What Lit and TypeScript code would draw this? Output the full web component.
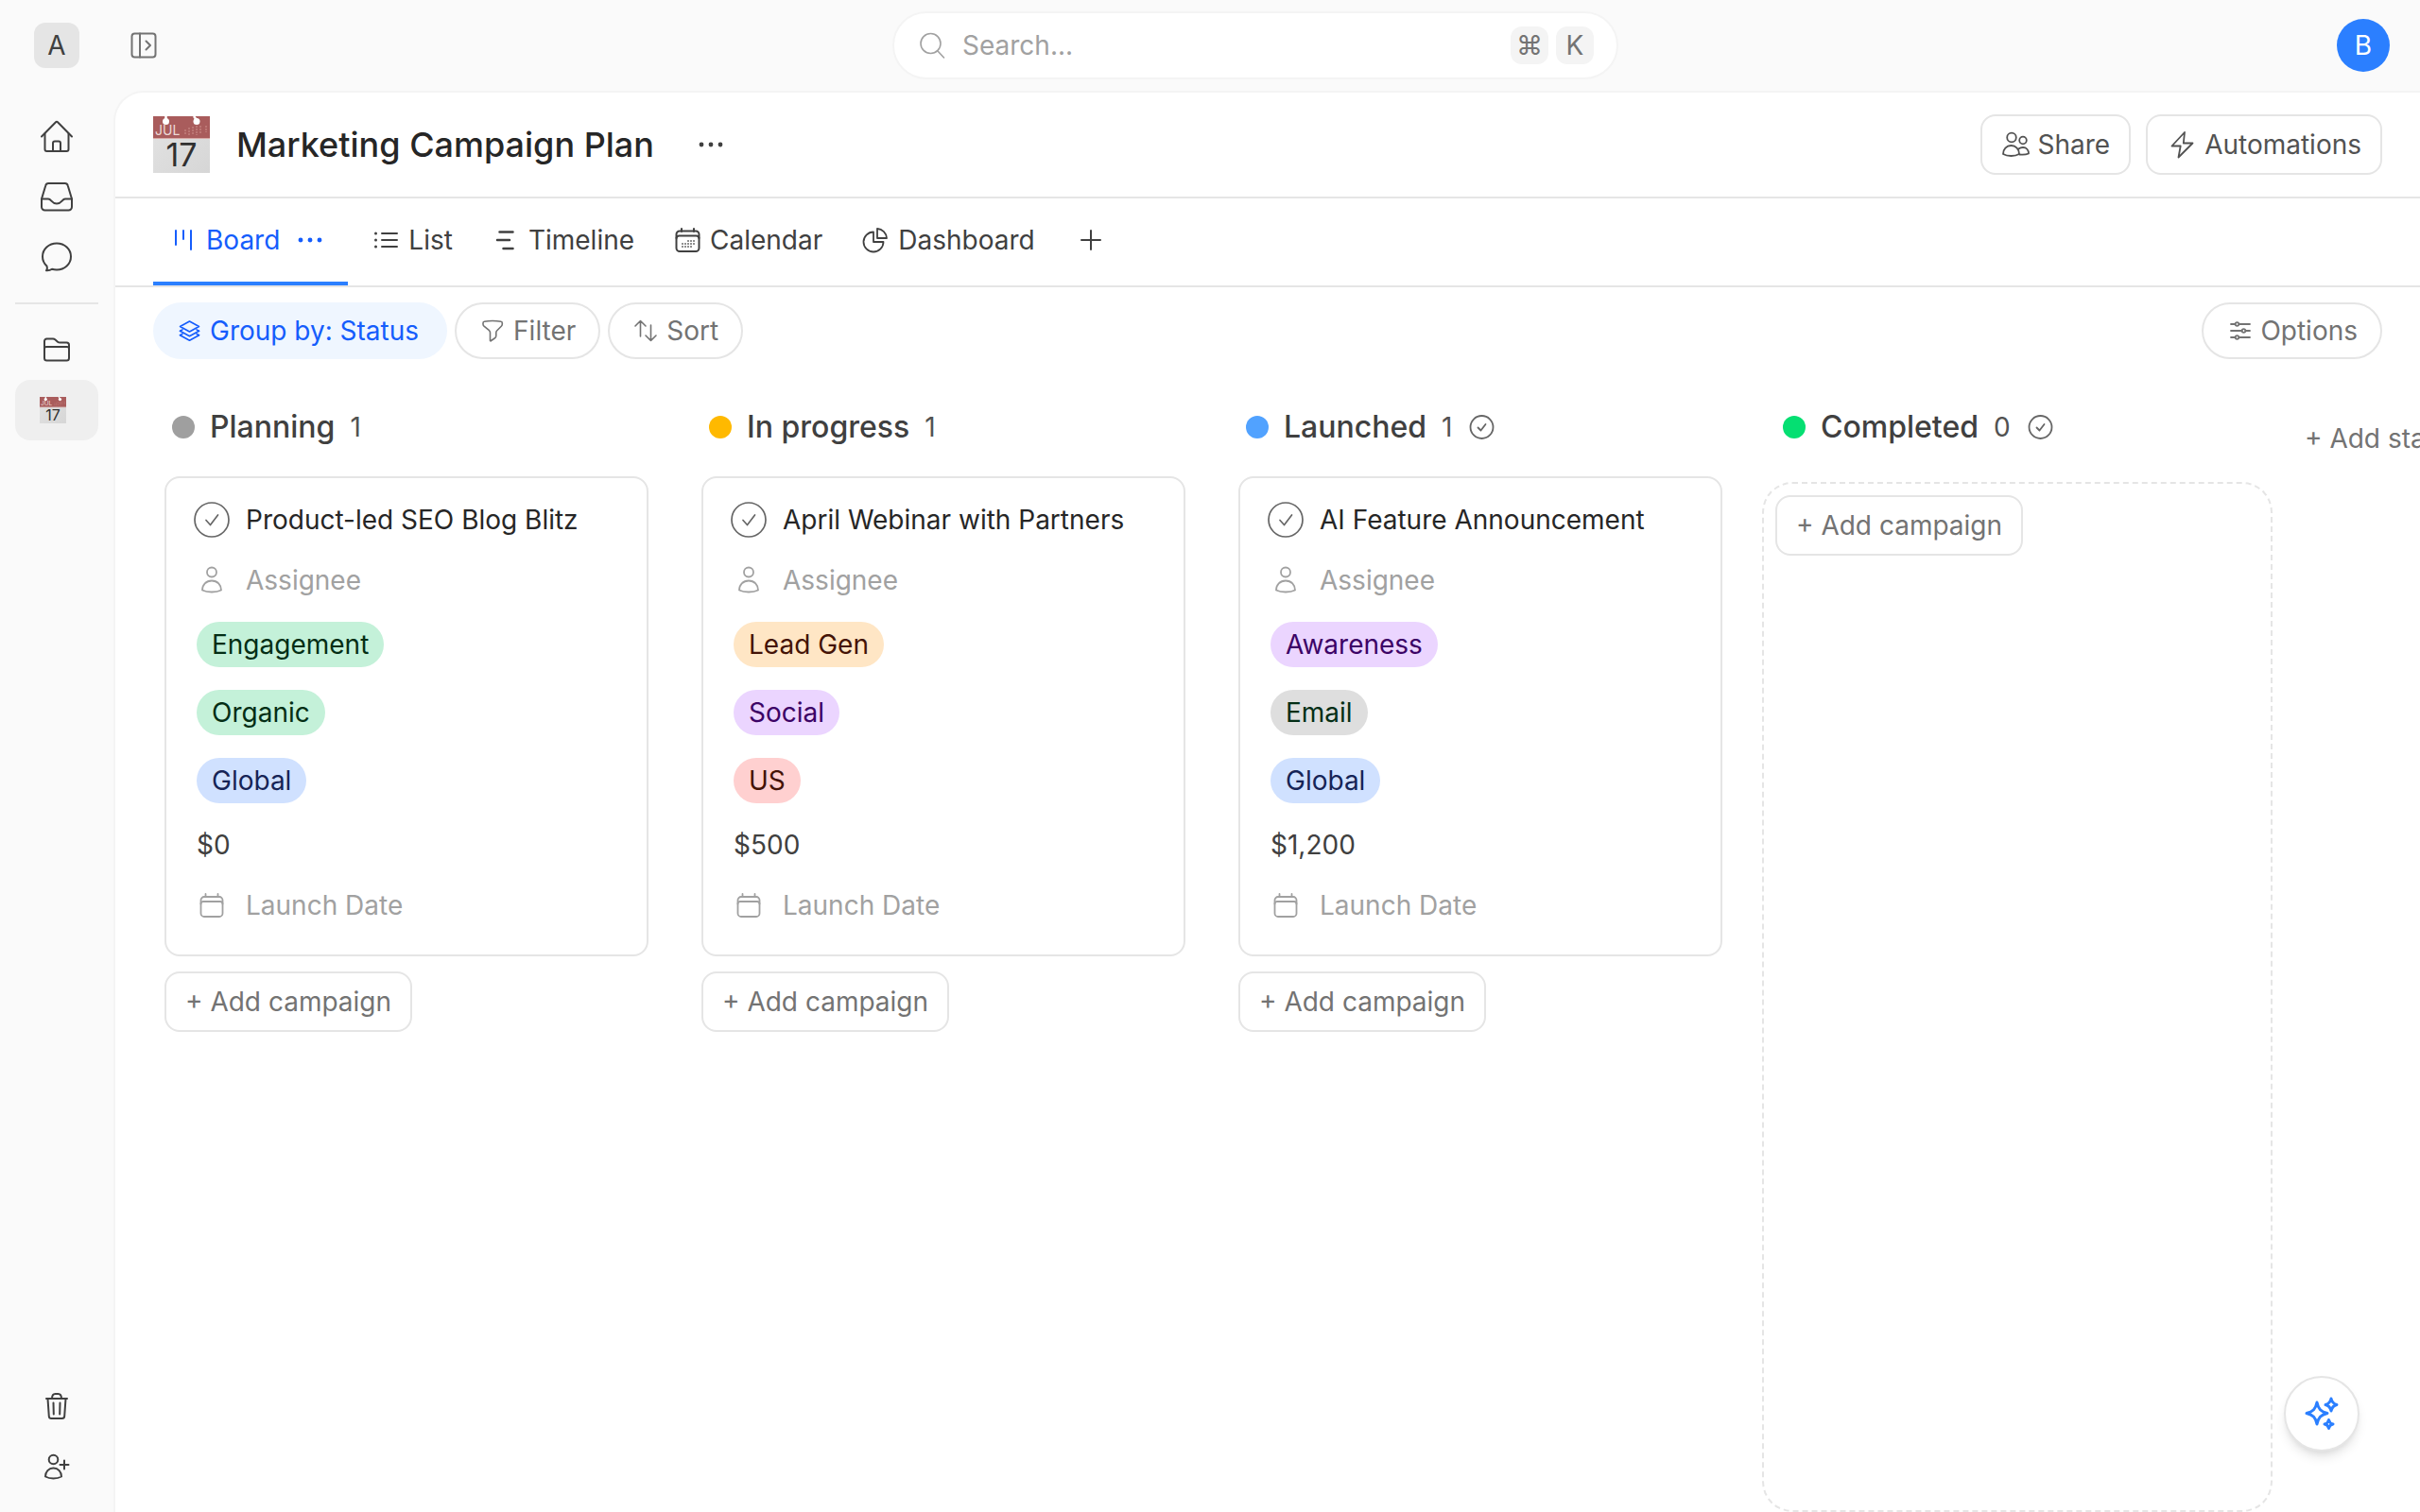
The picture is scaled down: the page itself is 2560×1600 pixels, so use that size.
import { LitElement, html, css, svg, nothing, type TemplateResult } from "lit";
import { customElement, property } from "lit/decorators.js";
import { classMap } from "lit/directives/class-map.js";

interface Tag {
  label: string;
  tone: "green" | "blue" | "purple" | "orange" | "red" | "gray";
}

interface Campaign {
  title: string;
  tags: Tag[];
  budget: string;
}

interface Stage {
  name: string;
  tone: "planning" | "progress" | "launched" | "completed";
  done: boolean;
  campaigns: Campaign[];
}

const STAGES: Stage[] = [
  {
    name: "Planning",
    tone: "planning",
    done: false,
    campaigns: [
      {
        title: "Product-led SEO Blog Blitz",
        tags: [
          { label: "Engagement", tone: "green" },
          { label: "Organic", tone: "green" },
          { label: "Global", tone: "blue" },
        ],
        budget: "$0",
      },
    ],
  },
  {
    name: "In progress",
    tone: "progress",
    done: false,
    campaigns: [
      {
        title: "April Webinar with Partners",
        tags: [
          { label: "Lead Gen", tone: "orange" },
          { label: "Social", tone: "purple" },
          { label: "US", tone: "red" },
        ],
        budget: "$500",
      },
    ],
  },
  {
    name: "Launched",
    tone: "launched",
    done: true,
    campaigns: [
      {
        title: "AI Feature Announcement",
        tags: [
          { label: "Awareness", tone: "purple" },
          { label: "Email", tone: "gray" },
          { label: "Global", tone: "blue" },
        ],
        budget: "$1,200",
      },
    ],
  },
  { name: "Completed", tone: "completed", done: true, campaigns: [] },
];

interface Glyph {
  w: number;
  h: number;
  stroke: number;
  body: TemplateResult;
}

const GLYPHS: Record<string, Glyph> = {
  panel: {
    w: 28, h: 28, stroke: 2,
    body: svg`<rect x="1.5" y="1.5" width="25" height="25" rx="3"/><path d="M10 1.5v25M16.500 9.500l4.500 4.500-4.500 4.500"/>`,
  },
  home: {
    w: 36, h: 36, stroke: 2,
    body: svg`<path d="M2 18.500 17 3.200a1.400 1.400 0 0 1 2 0L34 18.500"/><path d="M5.500 15.500V32a2 2 0 0 0 2 2h21a2 2 0 0 0 2-2V15.500"/><path d="M14 34v-8.500a2 2 0 0 1 2-2h4a2 2 0 0 1 2 2V34"/>`,
  },
  inbox: {
    w: 36, h: 36, stroke: 2,
    body: svg`<path d="M2 20.500 6.300 6.300A3 3 0 0 1 9.200 4h17.600a3 3 0 0 1 2.900 2.300L34 20.500V29a3.500 3.500 0 0 1-3.500 3.500h-25A3.500 3.500 0 0 1 2 29z"/><path d="M2 20.500h7c3.500 0 3.500 5 9 5s5.500-5 9-5h7"/>`,
  },
  chat: {
    w: 36, h: 36, stroke: 2,
    body: svg`<path d="M7.500 27.500C4.800 25 3 21.500 3 17.500 3 9.500 9.700 3.500 18 3.500s15 6 15 14-6.700 14-15 14c-1.700 0-3.400-.2-5-.7-1.800 1.300-3.700 1.700-6 1.500 1.300-1.800 1.200-3.300.5-4.800z"/>`,
  },
  folder: {
    w: 32, h: 32, stroke: 2,
    body: svg`<path d="M3 12.500V7a2.500 2.500 0 0 1 2.500-2.500H12c1 0 1.800.4 2.500 1l2.500 2.200c.7.6 1.500.8 2.500.8h7A2.500 2.500 0 0 1 29 11v14a2.500 2.500 0 0 1-2.500 2.500h-21A2.500 2.500 0 0 1 3 25z"/><path d="M3 15a2 2 0 0 1 2-2h22a2 2 0 0 1 2 2"/>`,
  },
  trash: {
    w: 32, h: 32, stroke: 2,
    body: svg`<path d="M5 8h22"/><path d="M11 8c0-3 1.500-5 3.500-5h3c2 0 3.500 2 3.500 5"/><path d="m6.500 8 1.300 18.700A2.500 2.500 0 0 0 10.300 29h11.400a2.500 2.500 0 0 0 2.500-2.300L25.500 8"/><path d="m12.500 12.500.3 12M19.500 12.500l-.3 12"/>`,
  },
  userPlus: {
    w: 32, h: 32, stroke: 2,
    body: svg`<circle cx="12.500" cy="8.500" r="4.800"/><path d="M4 26.500c0-5 3.500-9 8.500-9s8.500 4 8.500 9c-2.500 1.500-5.200 2-8.500 2s-6-.5-8.500-2z"/><path d="M24 9.500v9M19.500 14h9"/>`,
  },
  search: {
    w: 28, h: 28, stroke: 1.6,
    body: svg`<circle cx="12.500" cy="12" r="10.500"/><path d="m20 20 6.500 7"/>`,
  },
  dots: {
    w: 28, h: 28, stroke: 0,
    body: svg`<g fill="currentColor"><circle cx="4" cy="14" r="2.400"/><circle cx="14" cy="14" r="2.400"/><circle cx="24" cy="14" r="2.400"/></g>`,
  },
  board: {
    w: 26, h: 28, stroke: 2,
    body: svg`<path d="M4 4v15M12 4v9M20 4v20"/>`,
  },
  list: {
    w: 28, h: 28, stroke: 2,
    body: svg`<path d="M10 7h16M10 14h16M10 21h16"/><g fill="currentColor" stroke="none"><circle cx="3.500" cy="7" r="1.500"/><circle cx="3.500" cy="14" r="1.500"/><circle cx="3.500" cy="21" r="1.500"/></g>`,
  },
  timeline: {
    w: 28, h: 28, stroke: 2.5,
    body: svg`<path d="M7.500 5.500h14M5 14h13M11.500 23h10"/>`,
  },
  calendarDots: {
    w: 28, h: 28, stroke: 2,
    body: svg`<path d="M8 2v3M21 2v3"/><rect x="2.500" y="4.500" width="24" height="21.500" rx="3.500"/><path d="M2.500 12a3 3 0 0 1 3-2.500h18a3 3 0 0 1 3 2.500"/><g stroke="#8f8f8f" stroke-linecap="butt" stroke-dasharray="2 1"><path d="M14 15h8M8 18h14M8 21h11"/></g>`,
  },
  chart: {
    w: 28, h: 28, stroke: 1.8,
    body: svg`<path d="M12 5.500A10.500 10.500 0 1 0 22.500 16H12z"/><path d="M16 2a10.500 10.500 0 0 1 10 10H16z"/>`,
  },
  plus: {
    w: 34, h: 28, stroke: 2,
    body: svg`<path d="M17 4v20M7 14h20"/>`,
  },
  layers: {
    w: 26, h: 28, stroke: 1.6,
    body: svg`<path d="m12.500 4 10 5.500-10 5.500-10-5.500z"/><path d="m2.500 14.300 10 5.500 10-5.500M2.500 18.700l10 5.500 10-5.500"/><path d="m2.500 14.300 2.500-1.400M22.500 14.300l-2.500-1.400M2.500 18.700l2.500-1.400M22.500 18.700l-2.500-1.400"/>`,
  },
  filter: {
    w: 28, h: 28, stroke: 1.6,
    body: svg`<path d="M14 3.500c3.200 0 6.200.3 9 .8.800.1 1.300.8 1.300 1.600v1c0 .9-.4 1.700-1 2.300l-4.500 4.500c-.6.6-1 1.500-1 2.300v3.300c0 1.100-.6 2.100-1.600 2.700L12.500 24.500a.5.5 0 0 1-1-.4V16c0-.8-.4-1.700-1-2.300L5 9.200c-.6-.6-1-1.400-1-2.300v-1c0-.8.5-1.500 1.300-1.600C8 3.800 11 3.500 14 3.500z"/>`,
  },
  sort: {
    w: 28, h: 28, stroke: 1.6,
    body: svg`<path d="M8.500 20V3.500M3 9l5.500-5.500L14 9M19.500 8v16.500M14 19l5.500 5.500L25 19"/>`,
  },
  sliders: {
    w: 28, h: 28, stroke: 1.8,
    body: svg`<path d="M5 7h4.500M13.500 7H25M5 14h11.500M20.500 14H25M5 21h4.500M13.500 21H25"/><circle cx="11.500" cy="7" r="1.800"/><circle cx="18.500" cy="14" r="1.800"/><circle cx="11.500" cy="21" r="1.800"/>`,
  },
  people: {
    w: 32, h: 32, stroke: 1.8,
    body: svg`<circle cx="11" cy="8.500" r="4.800"/><path d="M2 26c0-5 3.500-9 8.500-9S19 21 19 26c-2.500 1.500-5.200 2-8.500 2S4.500 27.500 2 26z"/><circle cx="23" cy="11.500" r="3.800"/><path d="M18.500 20.500c1.200-1 2.700-1.500 4.500-1.500 3.500 0 6 2.800 6 6.500-2.800 1.200-6 1.400-9.500 1"/>`,
  },
  bolt: {
    w: 34, h: 32, stroke: 1.8,
    body: svg`<path d="M19 3 5.500 17.500h9.200l-2.200 12L27.500 14.500H17.800z"/>`,
  },
  person: {
    w: 32, h: 32, stroke: 1.8,
    body: svg`<circle cx="16" cy="7.500" r="5"/><path d="M6 26.500c0-5.500 4-10 10-10s10 4.500 10 10c-3 1.500-6.300 2-10 2s-7-.5-10-2z"/>`,
  },
  calendar: {
    w: 32, h: 32, stroke: 1.8,
    body: svg`<path d="M9.500 4v3M22.500 4v3"/><rect x="4.500" y="7" width="23" height="21" rx="3.500"/><path d="M4.500 14.500a2.500 2.500 0 0 1 2.500-2.500h18a2.500 2.500 0 0 1 2.500 2.500"/>`,
  },
  check: {
    w: 40, h: 40, stroke: 1.7,
    body: svg`<circle cx="20" cy="20" r="18"/><path d="M14 20.500 18.500 25.500 26.500 15"/>`,
  },
  checkSmall: {
    w: 32, h: 28, stroke: 1.8,
    body: svg`<circle cx="15.500" cy="14" r="12"/><path d="M11.500 14.500 14.500 17.500 19.500 11"/>`,
  },
  sparkles: {
    w: 40, h: 40, stroke: 3,
    body: svg`<path d="M15 8c1.500 7 4 9.800 11 11.500-7 1.700-9.500 4.500-11 11.500C13.500 24 11 21.200 4 19.500 11 17.800 13.500 15 15 8z"/><path d="M30 4c.9 4 2.400 5.600 6 6.500-3.600.9-5.100 2.500-6 6.500-.9-4-2.400-5.600-6-6.500C27.600 9.600 29.100 8 30 4zM27.500 26.500c.7 3 1.700 4 4.500 4.500-2.800.5-3.800 1.500-4.500 4.500-.7-3-1.700-4-4.500-4.500 2.800-.5 3.800-1.500 4.500-4.500z"/>`,
  },
};

const glyph = (name: string) => {
  const g = GLYPHS[name];
  return html`<svg
    class="glyph"
    width=${g.w}
    height=${g.h}
    viewBox="0 0 ${g.w} ${g.h}"
    fill="none"
    stroke="currentColor"
    stroke-width=${g.stroke}
    stroke-linecap="round"
    stroke-linejoin="round"
    aria-hidden="true"
  >${g.body}</svg>`;
};

const base = css`
  *,
  *::before,
  *::after {
    box-sizing: border-box;
  }
  .glyph {
    display: block;
    flex: none;
  }
  button {
    margin: 0;
    padding: 0;
    border: 0;
    background: none;
    color: inherit;
    font: inherit;
    cursor: pointer;
    display: inline-flex;
    align-items: center;
    white-space: nowrap;
  }
  .outlined {
    height: 64px;
    padding: 0 20px;
    border: 2px solid #e5e5e5;
    border-radius: 16px;
    background: #fff;
  }
`;

@customElement("tear-off-calendar")
export class TearOffCalendar extends LitElement {
  static styles = css`
    :host {
      display: block;
      width: 60px;
      height: 60px;
      flex: none;
    }
    .page {
      display: block;
      width: 100%;
      height: 100%;
    }
    .month {
      font: 400 14px Inter, sans-serif;
      fill: #ecd9d6;
    }
    .day {
      font: 400 34px Inter, sans-serif;
      fill: #303030;
    }
  `;

  render() {
    return html`<svg class="page" viewBox="0 0 60 60" aria-hidden="true">
      <defs>
        <linearGradient id="paper" x1="0" y1="0" x2="1" y2="1">
          <stop offset="0" stop-color="#e3e3e3" />
          <stop offset="1" stop-color="#d6d6d6" />
        </linearGradient>
      </defs>
      <rect width="60" height="60" fill="url(#paper)" />
      <rect width="60" height="23" fill="#a95c5c" />
      <rect y="23" width="60" height="1" fill="#d9a9a5" />
      <path d="M13.5 0v4M43 0l3 4" stroke="#fff" stroke-width="2.5" />
      <circle cx="13.5" cy="5.5" r="3.5" fill="#fff" />
      <circle cx="46" cy="5.5" r="3.5" fill="#fff" />
      <g stroke="#cf918c" stroke-width="1" stroke-dasharray="2 1">
        <path d="M34 14v6M38 12v8M42 11v9M46 10v10M50 10v8M56 10v7" />
      </g>
      <text class="month" x="2" y="20">JUL</text>
      <text class="day" x="30" y="53" text-anchor="middle">17</text>
    </svg>`;
  }
}

@customElement("campaign-card")
export class CampaignCard extends LitElement {
  @property({ attribute: false }) campaign!: Campaign;

  static styles = [
    base,
    css`
      :host {
        display: block;
      }
      .card {
        border: 2px solid #e5e5e5;
        border-radius: 16px;
        background: #fff;
        padding: 12px 28px 20px;
      }
      .row {
        display: flex;
        align-items: center;
        gap: 16px;
        height: 64px;
      }
      .lead {
        display: flex;
        justify-content: center;
        width: 40px;
      }
      .title {
        margin: 0;
        font-size: 28px;
        font-weight: 400;
        color: #262626;
        white-space: nowrap;
      }
      .done {
        color: #666;
      }
      .empty {
        color: #a1a1a1;
      }
      .tags {
        margin: 0;
        padding: 0 4px;
        list-style: none;
      }
      .tag-row {
        display: flex;
        align-items: center;
        height: 72px;
      }
      .tag {
        height: 48px;
        line-height: 48px;
        padding: 0 16px;
        border-radius: 24px;
      }
      .green { background: #c4f1d9; color: #032e15; }
      .blue { background: #d0e1ff; color: #162456; }
      .purple { background: #ebd5ff; color: #3c0366; }
      .orange { background: #ffe6c5; color: #441306; }
      .red { background: #ffd0d0; color: #441306; }
      .gray { background: #dedede; color: #032e15; }
      .budget {
        padding: 0 4px;
        color: #404040;
      }
    `,
  ];

  render() {
    const c = this.campaign;
    return html`<article class="card">
      <div class="row">
        <button class="lead done" aria-label="Mark complete">${glyph("check")}</button>
        <h3 class="title">${c.title}</h3>
      </div>
      <div class="row empty"><span class="lead">${glyph("person")}</span>Assignee</div>
      <ul class="tags">
        ${c.tags.map(
          (t) => html`<li class="tag-row">
            <span class=${classMap({ tag: true, [t.tone]: true })}>${t.label}</span>
          </li>`,
        )}
      </ul>
      <div class="row budget">${c.budget}</div>
      <div class="row empty"><span class="lead">${glyph("calendar")}</span>Launch Date</div>
    </article>`;
  }
}

@customElement("stage-column")
export class StageColumn extends LitElement {
  @property({ attribute: false }) stage!: Stage;

  static styles = [
    base,
    css`
      :host {
        display: flex;
        flex-direction: column;
        flex: none;
        width: 540px;
      }
      .head {
        display: flex;
        align-items: center;
        gap: 16px;
        height: 72px;
        padding: 0 22px;
      }
      .dot {
        width: 24px;
        height: 24px;
        border-radius: 50%;
      }
      .planning { background: #9f9f9f; }
      .progress { background: #ffb900; }
      .launched { background: #51a2ff; }
      .completed { background: #05df72; }
      .name {
        margin: 0;
        font-size: 32px;
        font-weight: 500;
        color: #404040;
      }
      .count {
        color: #525252;
      }
      .mark {
        color: #666;
      }
      .body {
        display: flex;
        flex-direction: column;
        align-items: stretch;
        gap: 16px;
        padding: 16px 14px;
      }
      .body.empty {
        flex: 1;
        margin-top: 22px;
        padding: 12px;
        border: 2px dashed #e5e5e5;
        border-radius: 32px;
      }
      .add {
        align-self: flex-start;
        color: #737373;
      }
    `,
  ];

  render() {
    const s = this.stage;
    const empty = s.campaigns.length === 0;
    return html`
      <header class="head">
        <span class=${classMap({ dot: true, [s.tone]: true })}></span>
        <h2 class="name">${s.name}</h2>
        <span class="count">${s.campaigns.length}</span>
        ${s.done ? html`<span class="mark">${glyph("checkSmall")}</span>` : nothing}
      </header>
      <div class=${classMap({ body: true, empty })}>
        ${s.campaigns.map((c) => html`<campaign-card .campaign=${c}></campaign-card>`)}
        <button class="outlined add">+ Add campaign</button>
      </div>
    `;
  }
}

@customElement("app-root")
export class AppRoot extends LitElement {
  static styles = [
    base,
    css`
      :host {
        display: grid;
        grid-template-columns: 120px minmax(0, 1fr);
        grid-template-rows: 96px minmax(0, 1fr);
        height: 100vh;
        background: #fafafa;
        color: #404040;
        font: 400 28px/40px Inter, "Liberation Sans", sans-serif;
        overflow: hidden;
      }
      .corner {
        display: flex;
        align-items: center;
        justify-content: center;
      }
      .workspace {
        justify-content: center;
        width: 48px;
        height: 48px;
        border-radius: 12px;
        background: #e5e5e5;
      }
      .topbar {
        display: grid;
        grid-template-columns: 1fr minmax(0, 768px) 1fr;
        align-items: center;
        padding: 0 32px 0 8px;
      }
      .toggle {
        justify-self: start;
        margin-left: 10px;
        color: #737373;
      }
      .search {
        display: flex;
        align-items: center;
        gap: 18px;
        height: 72px;
        padding: 0 24px 0 26px;
        border: 2px solid #f4f4f4;
        border-radius: 36px;
        background: #fff;
        color: #a1a1a1;
      }
      .query {
        flex: 1;
        min-width: 0;
        border: 0;
        padding: 0;
        outline: 0;
        background: none;
        font: inherit;
        color: #404040;
      }
      .query::placeholder {
        color: #a1a1a1;
        opacity: 1;
      }
      .keys {
        display: flex;
        gap: 8px;
      }
      .key {
        width: 40px;
        height: 40px;
        border-radius: 12px;
        background: #f4f4f4;
        color: #737373;
        font: inherit;
        text-align: center;
      }
      .avatar {
        justify-self: end;
        justify-content: center;
        width: 56px;
        height: 56px;
        border-radius: 50%;
        background: #2b7fff;
        color: #fff;
      }
      .rail {
        display: flex;
        flex-direction: column;
        justify-content: space-between;
        padding: 16px;
      }
      .group {
        display: flex;
        flex-direction: column;
      }
      .item {
        display: flex;
        align-items: center;
        justify-content: center;
        height: 64px;
        border-radius: 16px;
        color: #404040;
      }
      .item.current {
        background: #efefef;
        padding-right: 8px;
      }
      .mini {
        width: 28px;
        height: 28px;
      }
      .rule {
        width: 100%;
        height: 2px;
        margin: 16px 0;
        border: 0;
        background: #e5e5e5;
      }
      .panel {
        display: flex;
        flex-direction: column;
        min-width: 0;
        min-height: 0;
        border: solid #f4f4f4;
        border-width: 2px 0 0 2px;
        border-top-left-radius: 32px;
        background: #fff;
      }
      .heading {
        display: flex;
        align-items: center;
        height: 112px;
        padding: 0 40px;
        border-bottom: 2px solid #e5e5e5;
      }
      .name {
        margin: 0 46px 0 28px;
        font-size: 36px;
        font-weight: 500;
        color: #262626;
      }
      .actions {
        display: flex;
        gap: 16px;
        margin-left: auto;
        color: #525252;
      }
      .action {
        gap: 6px;
      }
      .tabs {
        display: flex;
        gap: 2px;
        height: 94px;
        padding: 0 40px;
        border-bottom: 2px solid #e5e5e5;
      }
      .tab {
        display: flex;
        align-items: center;
        gap: 10px;
        padding: 0 20px;
        border-bottom: 4px solid transparent;
        color: inherit;
        text-decoration: none;
      }
      .tab.active {
        margin-right: 4px;
        border-bottom-color: #2b7fff;
        color: #155dfc;
      }
      .tab-menu {
        padding: 0 6px 0 8px;
      }
      .tools {
        display: flex;
        align-items: center;
        gap: 8px;
        padding: 16px 40px;
      }
      .pill {
        gap: 8px;
        height: 60px;
        padding: 0 24px;
        border: 2px solid #e5e5e5;
        border-radius: 30px;
        color: #737373;
      }
      .pill.on {
        padding-right: 28px;
        border-color: #eff6ff;
        background: #eff6ff;
        color: #155dfc;
      }
      .end {
        margin-left: auto;
      }
      .board {
        display: flex;
        flex: 1;
        gap: 28px;
        min-height: 0;
        padding: 20px 0 0 38px;
        overflow: hidden;
      }
      .new-stage {
        flex: none;
        align-self: flex-start;
        height: 64px;
        margin-top: 16px;
        padding: 0 6px;
        color: #737373;
      }
      .assistant {
        position: fixed;
        right: 64px;
        bottom: 64px;
        justify-content: center;
        width: 80px;
        height: 80px;
        border: 2px solid #e5e5e5;
        border-radius: 50%;
        background: #fff;
        color: #2b7fff;
        box-shadow: 0 8px 12px -2px rgba(0, 0, 0, 0.1), 0 4px 8px -4px rgba(0, 0, 0, 0.1);
      }
    `,
  ];

  private tab(icon: string, label: string) {
    return html`<a class="tab" href="#">${glyph(icon)}${label}</a>`;
  }

  render() {
    return html`
      <div class="corner"><button class="workspace">A</button></div>
      <header class="topbar">
        <button class="toggle" aria-label="Expand sidebar">${glyph("panel")}</button>
        <label class="search">
          ${glyph("search")}
          <input class="query" type="text" placeholder="Search..." aria-label="Search" />
          <span class="keys"><kbd class="key">⌘</kbd><kbd class="key">K</kbd></span>
        </label>
        <button class="avatar">B</button>
      </header>

      <nav class="rail">
        <div class="group">
          <a class="item" href="#" aria-label="Home">${glyph("home")}</a>
          <a class="item" href="#" aria-label="Inbox">${glyph("inbox")}</a>
          <a class="item" href="#" aria-label="Messages">${glyph("chat")}</a>
          <hr class="rule" />
          <a class="item" href="#" aria-label="Folders">${glyph("folder")}</a>
          <a class="item current" href="#" aria-label="Marketing Campaign Plan">
            <tear-off-calendar class="mini"></tear-off-calendar>
          </a>
        </div>
        <div class="group">
          <a class="item" href="#" aria-label="Trash">${glyph("trash")}</a>
          <a class="item" href="#" aria-label="Invite">${glyph("userPlus")}</a>
        </div>
      </nav>

      <main class="panel">
        <div class="heading">
          <tear-off-calendar></tear-off-calendar>
          <h1 class="name">Marketing Campaign Plan</h1>
          <button aria-label="More">${glyph("dots")}</button>
          <div class="actions">
            <button class="outlined action">${glyph("people")}Share</button>
            <button class="outlined action">${glyph("bolt")}Automations</button>
          </div>
        </div>
        <nav class="tabs">
          <a class="tab active" href="#"
            >${glyph("board")}Board<span class="tab-menu">${glyph("dots")}</span></a
          >
          ${this.tab("list", "List")} ${this.tab("timeline", "Timeline")}
          ${this.tab("calendarDots", "Calendar")} ${this.tab("chart", "Dashboard")}
          <button class="tab" aria-label="Add view">${glyph("plus")}</button>
        </nav>
        <div class="tools">
          <button class="pill on">${glyph("layers")}Group by: Status</button>
          <button class="pill">${glyph("filter")}Filter</button>
          <button class="pill">${glyph("sort")}Sort</button>
          <button class="pill end">${glyph("sliders")}Options</button>
        </div>
        <section class="board">
          ${STAGES.map((s) => html`<stage-column .stage=${s}></stage-column>`)}
          <button class="new-stage">+ Add stage</button>
        </section>
      </main>

      <button class="assistant" aria-label="Assistant">${glyph("sparkles")}</button>
    `;
  }
}
